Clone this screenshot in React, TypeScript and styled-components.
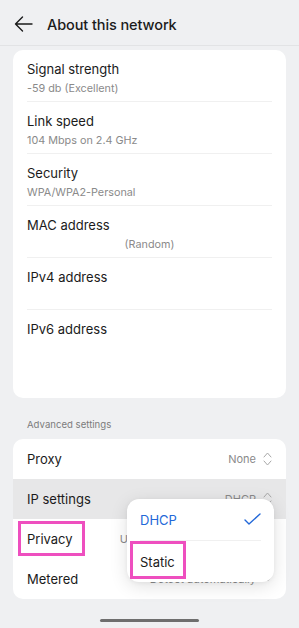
import styled, { createGlobalStyle } from 'styled-components';

const GlobalStyle = createGlobalStyle`
  html, body {
    margin: 0;
    padding: 0;
    background: #eff0f2;
  }
  body {
    font-family: Inter, 'Noto Sans', 'Liberation Sans', sans-serif;
    color: #1b1b1b;
    -webkit-font-smoothing: antialiased;
  }
`;

const Page = styled.div`
  position: relative;
  width: 299px;
  height: 628px;
  display: flex;
  flex-direction: column;
  overflow: hidden;
  background: #eff0f2;
`;

const Header = styled.header`
  display: flex;
  align-items: center;
  gap: 14px;
  height: 46px;
  padding: 3px 0 0 14px;
  box-sizing: border-box;
  border-bottom: 1px solid #e2e3e5;
`;

const BackButton = styled.button`
  display: flex;
  align-items: center;
  padding: 0;
  border: none;
  background: transparent;
  color: #1b1b1b;
`;

const Title = styled.h1`
  margin: 0;
  font-size: 14.5px;
  font-weight: 500;
  letter-spacing: -0.1px;
`;

const Content = styled.main`
  display: flex;
  flex-direction: column;
  padding: 4px 13px 0;
`;

const Card = styled.section`
  background: #fff;
  border-radius: 10px;
  overflow: hidden;
`;

const InfoCard = styled(Card)`
  padding: 0 14px 36px;
`;

const InfoRow = styled.div<{ $last?: boolean }>`
  display: flex;
  flex-direction: column;
  height: 52px;
  padding-top: 10px;
  box-sizing: border-box;
  border-bottom: ${(p) => (p.$last ? 'none' : '1px solid #f0f0f0')};
`;

const InfoTitle = styled.div`
  font-size: 13px;
  line-height: 18px;
  color: #1b1b1b;
`;

const InfoValue = styled.div<{ $center?: boolean }>`
  margin-top: 3px;
  font-size: 10.8px;
  line-height: 15px;
  color: #8a8a8a;
  text-align: ${(p) => (p.$center ? 'center' : 'left')};
`;

const SectionLabel = styled.div`
  padding: 20px 14px 8px;
  font-size: 9.6px;
  line-height: 13px;
  color: #7c7c7c;
`;

const SettingRow = styled.div<{ $pressed?: boolean }>`
  display: flex;
  align-items: center;
  justify-content: space-between;
  height: 40px;
  padding: 0 14px;
  box-sizing: border-box;
  background: ${(p) => (p.$pressed ? '#e7e7e8' : 'transparent')};
`;

const SettingLabel = styled.span<{ $marked?: boolean }>`
  position: relative;
  font-size: 13px;
  color: #1b1b1b;

  ${(p) =>
    p.$marked &&
    `
    &::after {
      content: '';
      position: absolute;
      left: -9px;
      right: -12px;
      top: -10px;
      bottom: -9px;
      border: 3px solid #ee4fbf;
      box-sizing: border-box;
    }
  `}
`;

const SettingValue = styled.span`
  display: flex;
  align-items: center;
  gap: 7px;
  font-size: 11px;
  color: #8a8a8a;
  white-space: nowrap;
`;

const Menu = styled.div`
  position: absolute;
  left: 127px;
  top: 499px;
  width: 147px;
  background: #fff;
  border-radius: 12px;
  box-shadow: 0 4px 18px rgba(0, 0, 0, 0.12), 0 1px 4px rgba(0, 0, 0, 0.05);
  padding: 0 13px;
  box-sizing: border-box;
  z-index: 2;
`;

const MenuItem = styled.div<{ $active?: boolean; $last?: boolean }>`
  display: flex;
  align-items: center;
  justify-content: space-between;
  height: 41px;
  font-size: 13px;
  color: ${(p) => (p.$active ? '#2368d8' : '#1b1b1b')};
  border-bottom: ${(p) => (p.$last ? 'none' : '1px solid #f0f0f0')};
`;

const MenuText = styled.span<{ $marked?: boolean }>`
  position: relative;

  ${(p) =>
    p.$marked &&
    `
    &::after {
      content: '';
      position: absolute;
      left: -10px;
      right: -11px;
      top: -13px;
      bottom: -9px;
      border: 3px solid #ee4fbf;
      box-sizing: border-box;
    }
  `}
`;

const HomeBar = styled.div`
  position: absolute;
  left: 100px;
  bottom: 6px;
  width: 99px;
  height: 3px;
  border-radius: 2px;
  background: #6e6e6e;
`;

function ArrowLeft() {
  return (
    <svg width='19' height='16' viewBox='0 0 19 16' fill='none'>
      <path d='M18 8H1.5M8.5 1L1.5 8l7 7' stroke='#1b1b1b' strokeWidth='1.4' strokeLinecap='round' strokeLinejoin='round' />
    </svg>
  );
}

function UpDown() {
  return (
    <svg width='9' height='14' viewBox='0 0 9 14' fill='none'>
      <path d='M1 5l3.5-4L8 5M1 9l3.5 4L8 9' stroke='#a8a8a8' strokeWidth='1' strokeLinecap='round' strokeLinejoin='round' />
    </svg>
  );
}

function Down() {
  return (
    <svg width='9' height='14' viewBox='0 0 9 14' fill='none'>
      <path d='M1 5l3.5 4L8 5' stroke='#a8a8a8' strokeWidth='1' strokeLinecap='round' strokeLinejoin='round' />
    </svg>
  );
}

function Check() {
  return (
    <svg width='17' height='13' viewBox='0 0 17 13' fill='none'>
      <path d='M1 7l4 4L16 1' stroke='#2368d8' strokeWidth='1.4' strokeLinecap='round' strokeLinejoin='round' />
    </svg>
  );
}

const info = [
  { title: 'Signal strength', value: '-59 db (Excellent)' },
  { title: 'Link speed', value: '104 Mbps on 2.4 GHz' },
  { title: 'Security', value: 'WPA/WPA2-Personal' },
  { title: 'MAC address', value: '(Random)', center: true },
  { title: 'IPv4 address', value: '' },
  { title: 'IPv6 address', value: '' },
];

export default function App() {
  return (
    <Page>
      <GlobalStyle />
      <Header>
        <BackButton>
          <ArrowLeft />
        </BackButton>
        <Title>About this network</Title>
      </Header>
      <Content>
        <InfoCard>
          {info.map((item, i) => (
            <InfoRow key={item.title} $last={i === info.length - 1}>
              <InfoTitle>{item.title}</InfoTitle>
              {item.value && <InfoValue $center={item.center}>{item.value}</InfoValue>}
            </InfoRow>
          ))}
        </InfoCard>
        <SectionLabel>Advanced settings</SectionLabel>
        <Card>
          <SettingRow>
            <SettingLabel>Proxy</SettingLabel>
            <SettingValue>
              None <UpDown />
            </SettingValue>
          </SettingRow>
          <SettingRow $pressed>
            <SettingLabel>IP settings</SettingLabel>
            <SettingValue>
              DHCP <UpDown />
            </SettingValue>
          </SettingRow>
          <SettingRow>
            <SettingLabel $marked>Privacy</SettingLabel>
            <SettingValue>
              Use random MAC address <UpDown />
            </SettingValue>
          </SettingRow>
          <SettingRow>
            <SettingLabel>Metered</SettingLabel>
            <SettingValue>
              Detect automatically <Down />
            </SettingValue>
          </SettingRow>
        </Card>
      </Content>
      <Menu>
        <MenuItem $active>
          <MenuText>DHCP</MenuText>
          <Check />
        </MenuItem>
        <MenuItem $last>
          <MenuText $marked>Static</MenuText>
        </MenuItem>
      </Menu>
      <HomeBar />
    </Page>
  );
}
